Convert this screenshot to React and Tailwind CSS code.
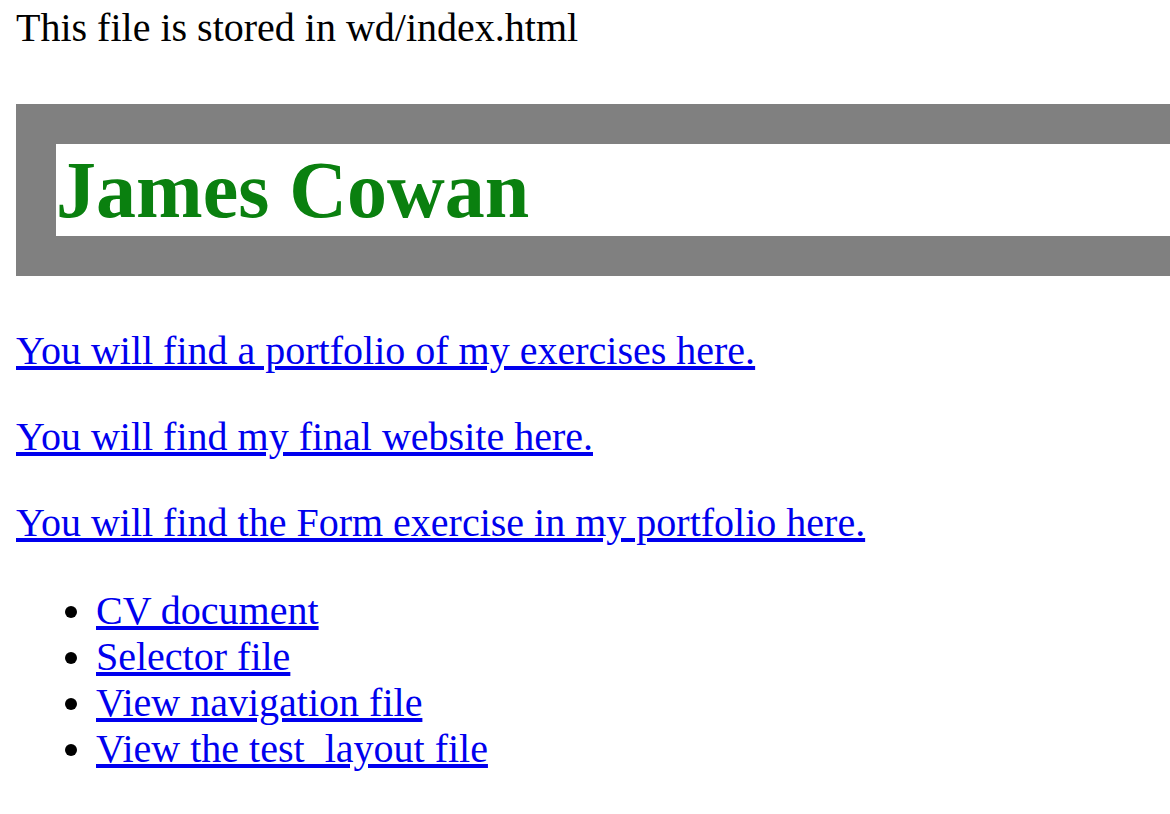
import React from 'react';

const links = [
    'You will find a portfolio of my exercises here.',
    'You will find my final website here.',
    'You will find the Form exercise in my portfolio here.',
];

const files = ['CV document', 'Selector file', 'View navigation file', 'View the test_layout file'];

export default function App() {
    return (
        <div className="min-h-screen bg-white pl-4 pt-[5px] font-['Liberation_Serif','Times_New_Roman',serif] text-[40px] leading-[46px] text-black">
            <p>This file is stored in wd/index.html</p>

            {/* Header */}
            <div className="mt-[53px] bg-[#808080] py-10 pl-10">
                <h1 className="bg-white text-[80px] font-bold leading-[92px] text-[#0a800f]">James Cowan</h1>
            </div>

            {links.map((text, i) => (
                <p key={text} className={i === 0 ? 'mt-[52px]' : 'mt-10'}>
                    <a href="#" className="text-[#0000ee] underline">{text}</a>
                </p>
            ))}

            <ul className="mt-[42px] list-disc pl-20">
                {files.map((f) => (
                    <li key={f}>
                        <a href="#" className="text-[#0000ee] underline">{f}</a>
                    </li>
                ))}
            </ul>
        </div>
    );
}
